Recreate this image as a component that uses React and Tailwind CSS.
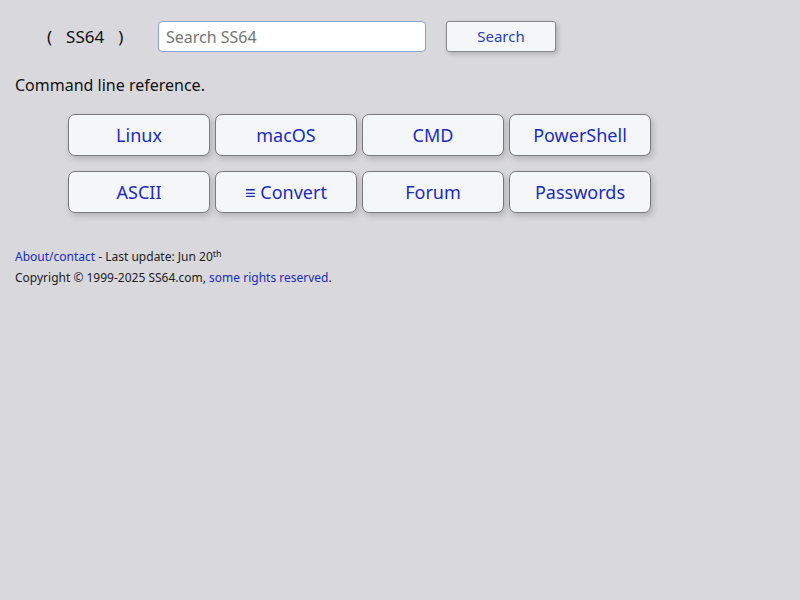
export default function App() {
  const row1 = ["Linux", "macOS", "CMD", "PowerShell"];
  const row2 = ["ASCII", "≡ Convert", "Forum", "Passwords"];
  return (
    <div className="min-h-[600px] w-full bg-[#d9d8dd] text-[#111] font-['Liberation_Sans',Arial,sans-serif]">
      {/* HEADER */}
      <div className="flex items-center pt-[21px] h-[52px]">
        <div className="ml-[47px] w-[111px] text-[17px] flex gap-[14px]">
          <span>(</span><span>SS64</span><span>)</span>
        </div>
        <input
          type="text"
          placeholder="Search SS64"
          className="w-[268px] h-[31px] bg-white border border-[#8aa3d6] rounded-[4px] px-[7px] text-[16px] placeholder-[#757575] outline-none"
        />
        <button className="ml-[20px] w-[110px] h-[31px] bg-[#f5f6fa] border border-[#8a8a8a] rounded-[3px] text-[15px] text-[#2a3eb1] shadow-[2px_2px_5px_rgba(0,0,0,0.2)]">
          Search
        </button>
      </div>

      <p className="ml-[15px] mt-[21px] text-[16px]">Command line reference.</p>

      {/* BUTTON GRID */}
      <div className="ml-[68px] mt-[17px] flex flex-col gap-[15px]">
        {[row1, row2].map((row, i) => (
          <div key={i} className="flex gap-[5px]">
            {row.map((t) => (
              <a
                key={t}
                href="#"
                className="w-[142px] h-[42px] flex items-center justify-center bg-[#f5f6fa] border border-[#7a7a7a] rounded-[7px] text-[18px] text-[#1a2bbf] shadow-[2px_3px_6px_rgba(0,0,0,0.18)]"
              >
                {t}
              </a>
            ))}
          </div>
        ))}
      </div>

      {/* FOOTER */}
      <div className="ml-[15px] mt-[33px] text-[12px] text-[#222] leading-[21px]">
        <p>
          <a href="#" className="text-[#1a2bbf]">About/contact</a> - Last update: Jun 20<sup className="text-[9px]">th</sup>
        </p>
        <p>
          Copyright © 1999-2025 SS64.com, <a href="#" className="text-[#1a2bbf]">some rights reserved</a>.
        </p>
      </div>
    </div>
  );
}
